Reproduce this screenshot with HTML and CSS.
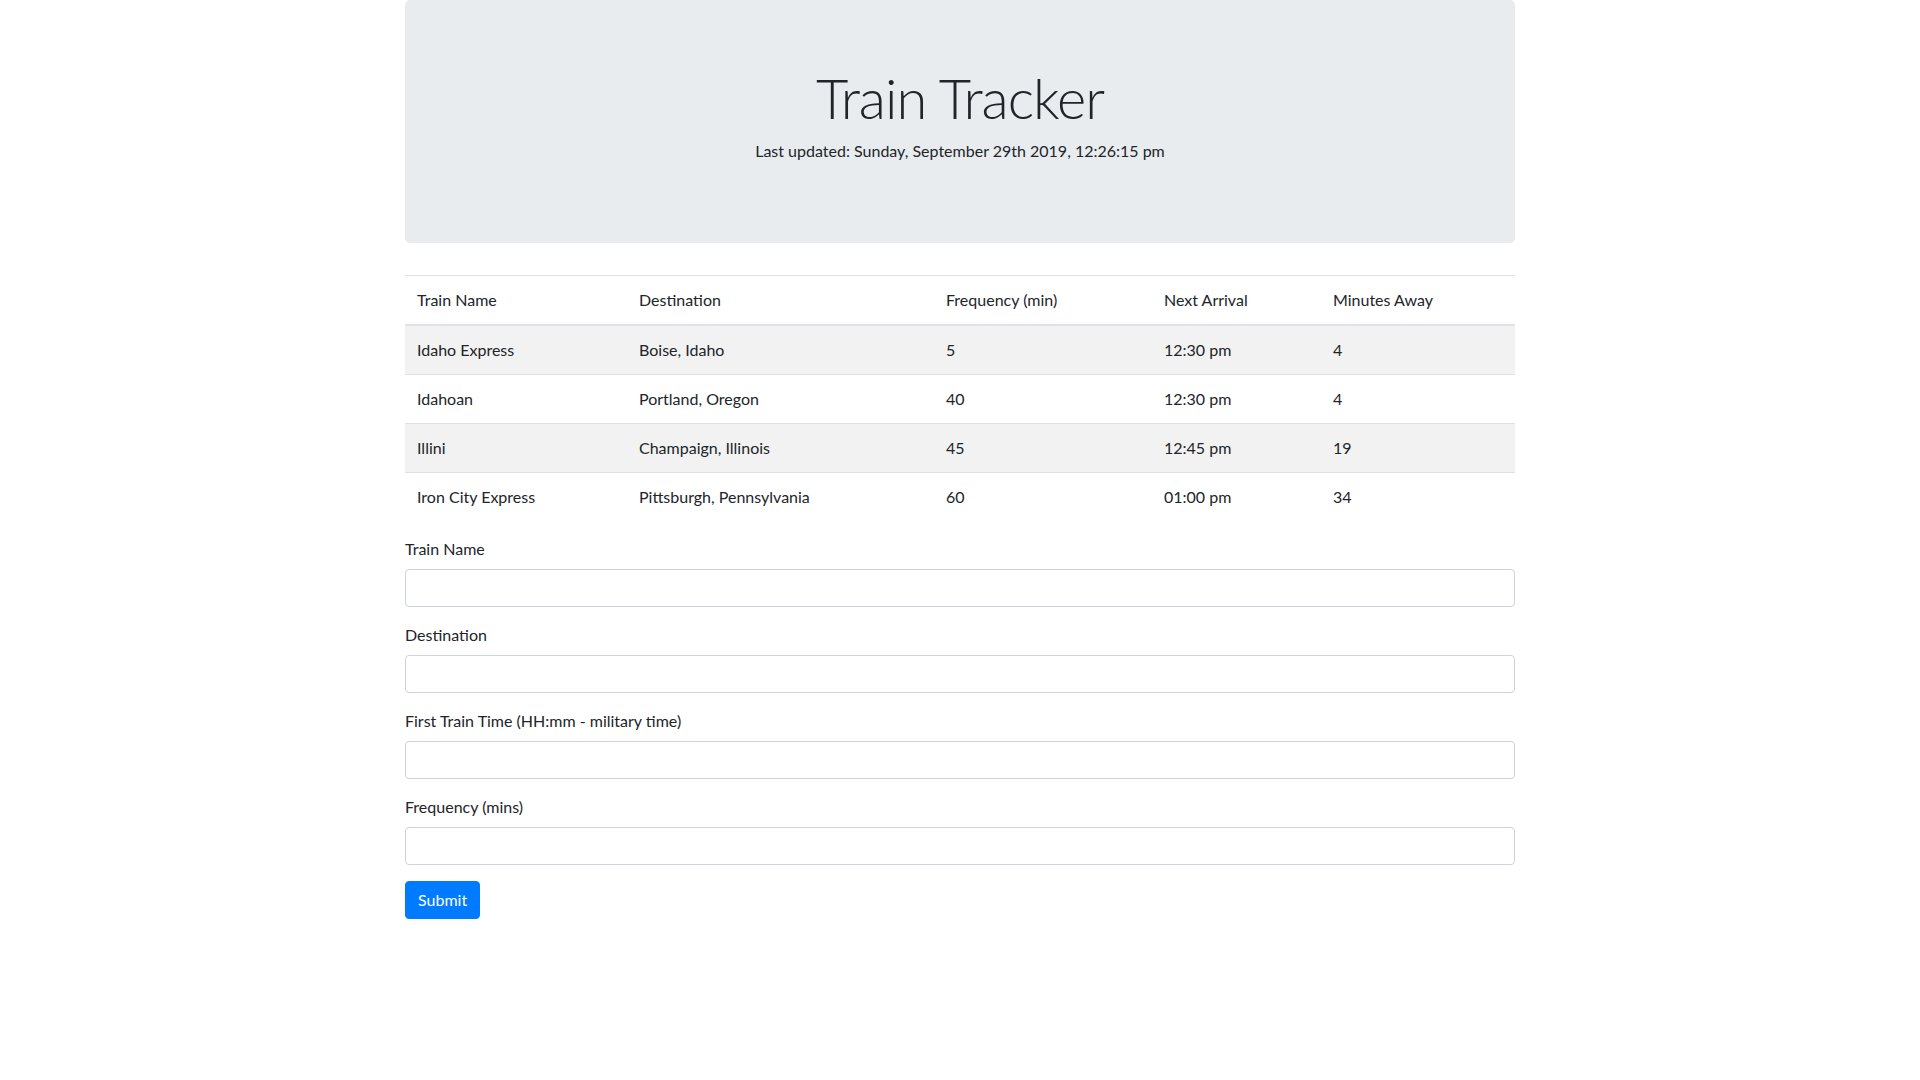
FILE: index.html
```html
<!DOCTYPE html>
<html lang="en">
<head>
<meta charset="utf-8">
<title>Train Tracker</title>
<link rel="stylesheet" href="styles.css">
</head>
<body>
<div class="container">
  <div class="jumbotron">
    <h1 class="display">Train Tracker</h1>
    <p class="updated">Last updated: Sunday, September 29th 2019, 12:26:15 pm</p>
  </div>
  <table class="table">
    <colgroup>
      <col class="c1"><col class="c2"><col class="c3"><col class="c4"><col class="c5">
    </colgroup>
    <thead>
      <tr><th>Train Name</th><th>Destination</th><th>Frequency (min)</th><th>Next Arrival</th><th>Minutes Away</th></tr>
    </thead>
    <tbody>
      <tr class="odd"><td>Idaho Express</td><td>Boise, Idaho</td><td>5</td><td>12:30 pm</td><td>4</td></tr>
      <tr><td>Idahoan</td><td>Portland, Oregon</td><td>40</td><td>12:30 pm</td><td>4</td></tr>
      <tr class="odd"><td>Illini</td><td>Champaign, Illinois</td><td>45</td><td>12:45 pm</td><td>19</td></tr>
      <tr><td>Iron City Express</td><td>Pittsburgh, Pennsylvania</td><td>60</td><td>01:00 pm</td><td>34</td></tr>
    </tbody>
  </table>
  <form class="form">
    <div class="form-group">
      <label for="name">Train Name</label>
      <input id="name" class="form-control" type="text">
    </div>
    <div class="form-group">
      <label for="dest">Destination</label>
      <input id="dest" class="form-control" type="text">
    </div>
    <div class="form-group">
      <label for="first">First Train Time (HH:mm - military time)</label>
      <input id="first" class="form-control" type="text">
    </div>
    <div class="form-group">
      <label for="freq">Frequency (mins)</label>
      <input id="freq" class="form-control" type="text">
    </div>
    <button type="button" class="btn">Submit</button>
  </form>
</div>
</body>
</html>
```

FILE: styles.css
```css
* { box-sizing: border-box; }
html, body { margin: 0; padding: 0; }
body {
  font-family: "Segoe UI", Lato, "Open Sans", sans-serif;
  font-size: 16px;
  line-height: 1.5;
  color: #212529;
  background: #fff;
}
.container {
  max-width: 1140px;
  margin: 0 auto;
  padding: 0 15px;
}
.jumbotron {
  background: #e9ecef;
  border-radius: 4.8px;
  padding: 64px 32px;
  margin-bottom: 32px;
  text-align: center;
}
.display {
  font-size: 56px;
  font-weight: 300;
  line-height: 1.2;
  letter-spacing: -1px;
  margin: 0 0 8px;
}
.updated {
  margin: 0 0 16px;
  font-size: 16px;
}
.table {
  width: 100%;
  border-collapse: collapse;
  table-layout: fixed;
  margin-bottom: 16px;
}
.c1 { width: 222px; }
.c2 { width: 307px; }
.c3 { width: 218px; }
.c4 { width: 169px; }
.c5 { width: 194px; }
.table th, .table td {
  padding: 12px;
  text-align: left;
  vertical-align: top;
  border-top: 1px solid #dee2e6;
  font-weight: 400;
}
.table thead th {
  border-bottom: 2px solid #dee2e6;
}
.table tbody tr.odd { background: rgba(0,0,0,0.05); }
.form-group { margin-bottom: 16px; }
.form-group label {
  display: inline-block;
  margin-bottom: 8px;
}
.form-control {
  display: block;
  width: 100%;
  height: 38px;
  padding: 6px 12px;
  font: inherit;
  color: #495057;
  background: #fff;
  border: 1px solid #ced4da;
  border-radius: 4px;
}
.btn {
  display: inline-block;
  font: inherit;
  line-height: 1.5;
  color: #fff;
  background: #007bff;
  border: 1px solid #007bff;
  padding: 6px 12px;
  border-radius: 4px;
}
```
